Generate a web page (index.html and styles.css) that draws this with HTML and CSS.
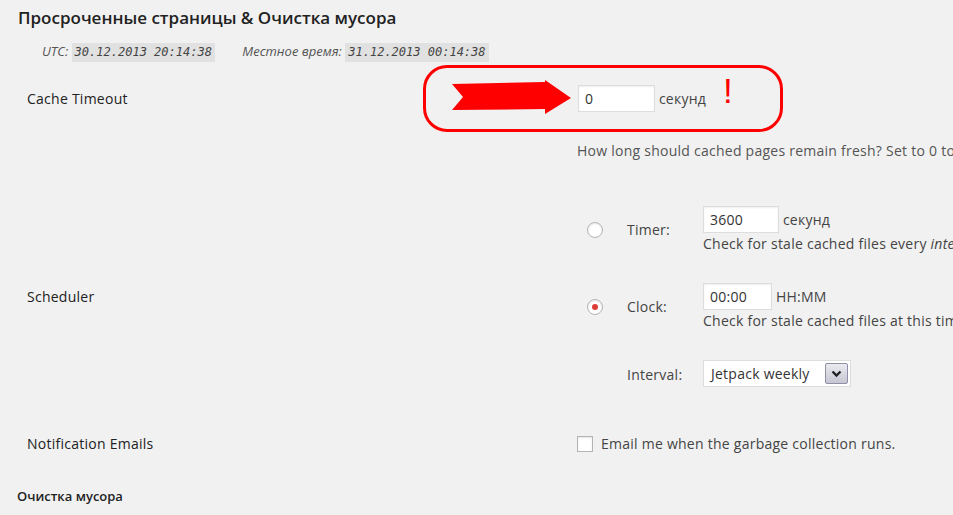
FILE: index.html
```html
<!DOCTYPE html>
<html lang="ru">
<head>
    <meta charset="UTF-8">
    <meta name="viewport" content="width=device-width, initial-scale=1.0">
    <title>Просроченные страницы & Очистка мусора</title>
    <link rel="stylesheet" href="styles.css">
</head>
<body>
    <div class="wrap">
        <h3>Просроченные страницы &amp; Очистка мусора</h3>
        <p class="time-line">
            <span class="time-label">UTC:</span> <code>30.12.2013 20:14:38</code>
            <span class="time-label local">Местное время:</span> <code>31.12.2013 00:14:38</code>
        </p>

        <table class="form-table">
            <tr class="row-timeout">
                <th>Cache Timeout</th>
                <td>
                    <div class="field-line">
                        <input type="text" class="small-input" value="0"> <span class="unit">секунд</span>
                    </div>
                    <p class="description">How long should cached pages remain fresh? Set to 0 to disable garbage collection. A good starting point is 3600 seconds.</p>
                </td>
            </tr>
            <tr class="row-scheduler">
                <th>Scheduler</th>
                <td>
                    <table class="sched-table">
                        <tr>
                            <td class="radio-cell"><span class="radio"></span></td>
                            <td class="sched-label">Timer:</td>
                            <td>
                                <input type="text" class="timer-input" value="3600"> <span class="unit">секунд</span>
                                <div class="hint">Check for stale cached files every <em>interval</em> seconds.</div>
                            </td>
                        </tr>
                        <tr>
                            <td class="radio-cell"><span class="radio checked"></span></td>
                            <td class="sched-label">Clock:</td>
                            <td>
                                <input type="text" class="clock-input" value="00:00"> <span class="unit">HH:MM</span>
                                <div class="hint">Check for stale cached files at this time <em>(UTC)</em> or starting at this time every <em>interval</em> below.</div>
                            </td>
                        </tr>
                        <tr class="interval-row">
                            <td class="radio-cell"></td>
                            <td class="sched-label">Interval:</td>
                            <td>
                                <div class="select">
                                    <span class="select-value">Jetpack weekly</span>
                                    <span class="select-button">
                                        <svg width="11" height="8" viewBox="0 0 11 8"><path d="M1.5 1.5 L5.5 5.5 L9.5 1.5" fill="none" stroke="#222" stroke-width="2.4"/></svg>
                                    </span>
                                </div>
                            </td>
                        </tr>
                    </table>
                </td>
            </tr>
            <tr class="row-email">
                <th>Notification Emails</th>
                <td>
                    <label class="check-line"><span class="checkbox"></span> Email me when the garbage collection runs.</label>
                </td>
            </tr>
        </table>

        <h4>Очистка мусора</h4>
    </div>

    <!-- annotation drawn over the screenshot -->
    <div class="callout"></div>
    <svg class="arrow" width="130" height="40" viewBox="450 78 130 40">
        <polygon points="452,84 545,82 545,80 571,98 545,114 545,109 452,110 463,97" fill="#ff0000"/>
    </svg>
    <span class="bang">!</span>
</body>
</html>
```

FILE: styles.css
```css
html, body
{
    margin: 0;
    overflow: hidden;
}
body
{
    background-color: #f1f1f1;
    font-family: "Open Sans", "Noto Sans", sans-serif;
    font-size: 14px;
    line-height: 20px;
    letter-spacing: 0.25px;
    color: #444;
    position: relative;
    height: 515px;
}
.wrap
{
    padding-left: 18px;
}
h3
{
    margin: 0;
    padding-top: 6px;
    font-size: 17px;
    line-height: 24px;
    font-weight: 600;
    letter-spacing: 0;
    color: #222;
}
.time-line
{
    margin: 12px 0 0 24px;
    font-size: 13px;
    line-height: 19px;
    letter-spacing: 0;
    white-space: nowrap;
}
.time-label
{
    font-style: italic;
    color: #555;
}
.time-label.local
{
    margin-left: 24px;
}
code
{
    display: inline-block;
    background-color: #e1e1e1;
    padding: 0 3px;
    font-family: "DejaVu Sans Mono", monospace;
    font-size: 12px;
    font-style: italic;
    line-height: 19px;
    color: #444;
}

.form-table
{
    border-collapse: collapse;
    table-layout: fixed;
    width: 1500px;
    margin-left: 9px;
    margin-top: 4px;
}
.form-table > tbody > tr > th
{
    width: 550px;
    padding: 0;
    text-align: left;
    font-weight: 400;
    color: #222;
    vertical-align: middle;
}
.form-table > tbody > tr > td
{
    padding: 0;
    white-space: nowrap;
}
.form-table > tbody > tr.row-timeout > th
{
    vertical-align: top;
    padding-top: 23px;
}
.form-table > tbody > tr.row-timeout > td
{
    padding-top: 19px;
}
input
{
    font-family: "Open Sans", sans-serif;
    font-size: 14px;
    letter-spacing: 0.25px;
    color: #333;
    background: #fff;
    border: 1px solid #ddd;
    box-shadow: inset 0 1px 2px rgba(0, 0, 0, 0.07);
    padding: 0 6px;
    height: 27px;
    box-sizing: border-box;
    margin: 0;
    vertical-align: middle;
}
.small-input
{
    width: 77px;
    margin-left: 1px;
}
.unit
{
    vertical-align: middle;
    color: #444;
}
.description
{
    margin: 29px 0 0 0;
    color: #555;
}

.form-table > tbody > tr.row-scheduler > th,
.form-table > tbody > tr.row-scheduler > td
{
    padding-top: 45px;
}
.sched-table
{
    border-collapse: collapse;
}
.sched-table td
{
    padding: 0 0 30px 0;
    vertical-align: middle;
    white-space: nowrap;
}
.sched-table .interval-row td
{
    padding-bottom: 0;
}
.radio-cell
{
    width: 50px;
}
.radio
{
    display: block;
    width: 16px;
    height: 16px;
    box-sizing: border-box;
    margin-left: 10px;
    border: 1px solid #b4b4b4;
    border-radius: 50%;
    background: #fff;
    box-shadow: inset 0 1px 2px rgba(0, 0, 0, 0.1);
    position: relative;
}
.radio.checked::after
{
    content: "";
    position: absolute;
    left: 4px;
    top: 4px;
    width: 6px;
    height: 6px;
    border-radius: 50%;
    background: #dd3d36;
}
.sched-table td.sched-label
{
    width: 76px;
    color: #444;
}
.sched-table .interval-row td.sched-label
{
    padding-top: 2px;
}
.timer-input
{
    width: 76px;
}
.clock-input
{
    width: 69px;
}
.hint
{
    line-height: 18px;
    margin-top: 2px;
}

.select
{
    display: flex;
    align-items: center;
    justify-content: space-between;
    width: 148px;
    height: 27px;
    box-sizing: border-box;
    background: #fff;
    border: 1px solid #ddd;
    padding: 0 2px 0 7px;
}
.select-value
{
    color: #333;
}
.select-button
{
    display: flex;
    align-items: center;
    justify-content: center;
    width: 23px;
    height: 21px;
    box-sizing: border-box;
    border: 1px solid #8f90a8;
    border-radius: 2px;
    background: linear-gradient(#eaeaf0, #c6c6d2);
}

.form-table > tbody > tr.row-email > th,
.form-table > tbody > tr.row-email > td
{
    padding-top: 47px;
}
.check-line
{
    display: flex;
    align-items: center;
    gap: 8px;
}
.checkbox
{
    display: inline-block;
    width: 16px;
    height: 16px;
    box-sizing: border-box;
    border: 1px solid #b4b4b4;
    background: #fff;
    box-shadow: inset 0 1px 2px rgba(0, 0, 0, 0.1);
}
h4
{
    margin: 32px 0 0 -1px;
    font-size: 13px;
    font-weight: 600;
    letter-spacing: 0;
    color: #222;
}

/* red annotation */
.callout
{
    position: absolute;
    left: 423px;
    top: 65px;
    width: 360px;
    height: 67px;
    box-sizing: border-box;
    border: 3px solid #ff0000;
    border-radius: 24px;
}
.arrow
{
    position: absolute;
    left: 450px;
    top: 78px;
}
.bang
{
    position: absolute;
    left: 723px;
    top: 72px;
    font-family: "Liberation Sans", sans-serif;
    font-size: 35px;
    line-height: 38px;
    color: #ff0000;
}
```
